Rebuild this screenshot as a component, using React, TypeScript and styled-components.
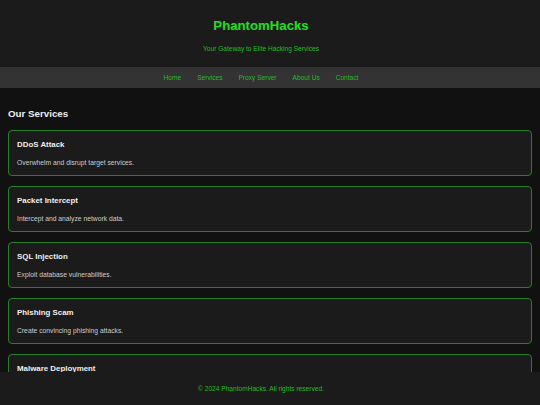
import React from "react";
import styled, { createGlobalStyle } from "styled-components";

const Global = createGlobalStyle`
  html, body { margin: 0; padding: 0; }
  body {
    background: #111111;
    font-family: "Liberation Sans", Arial, sans-serif;
    font-size: 6.5px;
    color: #e0e0e0;
  }
`;

const Header = styled.header`
  background: #1b1b1b;
  height: 67px;
  box-sizing: border-box;
  padding: 18px 18px 0 0;
  text-align: center;
`;

const Title = styled.h1`
  margin: 0;
  font-size: 13.2px;
  font-weight: bold;
  line-height: 15px;
  color: #1fe01f;
`;

const Tagline = styled.p`
  margin: 12px 0 0;
  font-size: 6.6px;
  line-height: 7.5px;
  color: #1fbf1f;
`;

const Nav = styled.nav`
  background: #333333;
  height: 21px;
  box-sizing: border-box;
  padding-right: 18px;
  display: flex;
  justify-content: center;
  align-items: center;
  gap: 16px;
`;

const NavLink = styled.a`
  color: #1fbf1f;
  text-decoration: none;
  font-size: 6.6px;
`;

const Main = styled.main`
  padding: 20px 8px 40px;
`;

const SectionTitle = styled.h2`
  margin: 0 0 11px;
  font-size: 9.75px;
  line-height: 11px;
  font-weight: bold;
  color: #eeeeee;
`;

const List = styled.div`
  display: flex;
  flex-direction: column;
  gap: 10px;
`;

const Card = styled.div`
  background: #1b1b1b;
  border: 1px solid #26802a;
  border-radius: 4px;
  padding: 9px 8px;
  height: 46px;
  box-sizing: border-box;
`;

const CardTitle = styled.h3`
  margin: 0 0 10px;
  font-size: 7.9px;
  line-height: 9px;
  font-weight: bold;
  color: #eeeeee;
`;

const CardText = styled.p`
  margin: 0;
  font-size: 6.75px;
  line-height: 7.5px;
  color: #cccccc;
`;

const Footer = styled.footer`
  position: fixed;
  left: 0;
  right: 0;
  bottom: 0;
  height: 33px;
  box-sizing: border-box;
  padding-right: 18px;
  background: #1b1b1b;
  display: flex;
  align-items: center;
  justify-content: center;
  color: #1fbf1f;
  font-size: 6.6px;
`;

const services = [
  { title: "DDoS Attack", text: "Overwhelm and disrupt target services." },
  { title: "Packet Intercept", text: "Intercept and analyze network data." },
  { title: "SQL Injection", text: "Exploit database vulnerabilities." },
  { title: "Phishing Scam", text: "Create convincing phishing attacks." },
  { title: "Malware Deployment", text: "Deploy custom malware payloads." },
];

export default function App() {
  return (
    <>
      <Global />
      <Header>
        <Title>PhantomHacks</Title>
        <Tagline>Your Gateway to Elite Hacking Services</Tagline>
      </Header>
      <Nav>
        {["Home", "Services", "Proxy Server", "About Us", "Contact"].map((l) => (
          <NavLink key={l} href="#">
            {l}
          </NavLink>
        ))}
      </Nav>
      <Main>
        <SectionTitle>Our Services</SectionTitle>
        <List>
          {services.map((s) => (
            <Card key={s.title}>
              <CardTitle>{s.title}</CardTitle>
              <CardText>{s.text}</CardText>
            </Card>
          ))}
        </List>
      </Main>
      <Footer>© 2024 PhantomHacks. All rights reserved.</Footer>
    </>
  );
}
